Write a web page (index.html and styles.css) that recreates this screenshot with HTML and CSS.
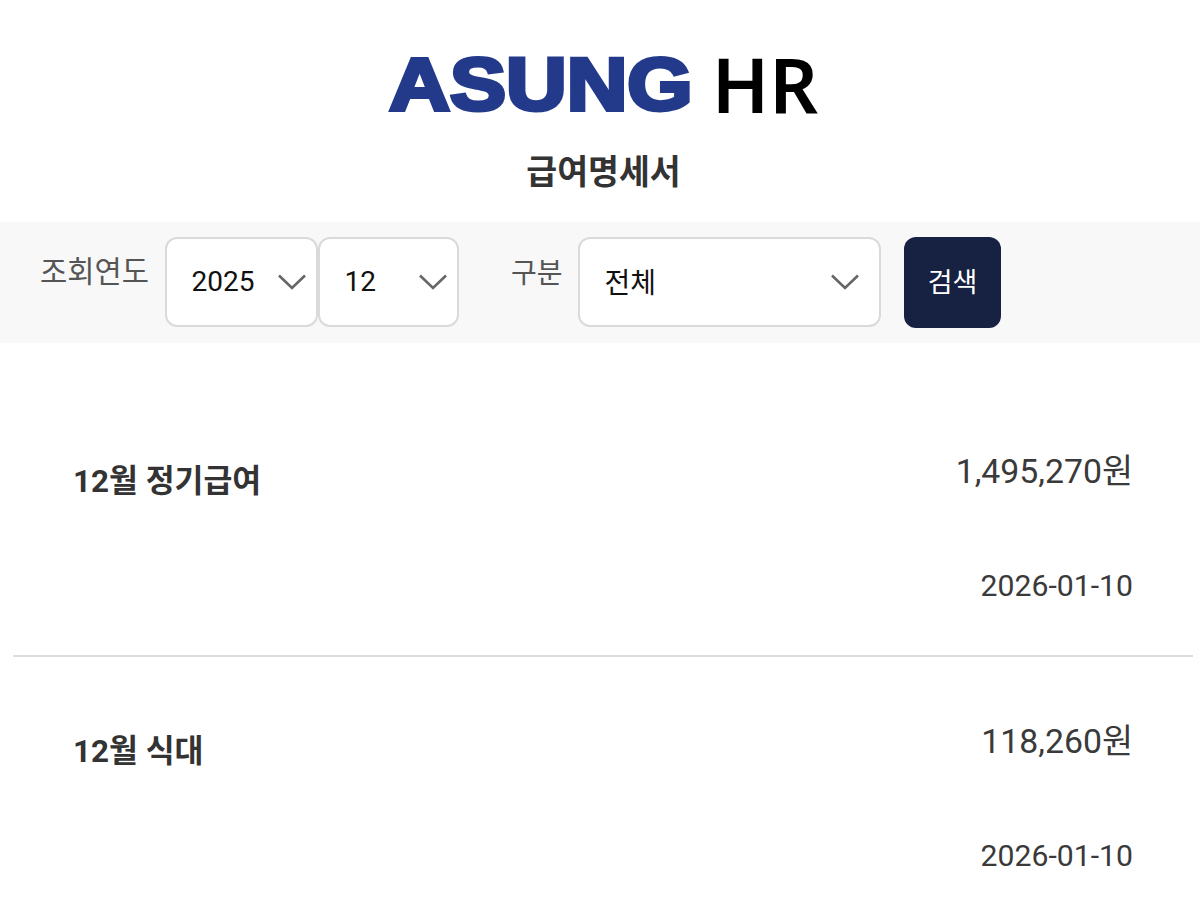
FILE: index.html
```html
<!DOCTYPE html>
<html lang="ko">
<head>
    <meta charset="UTF-8">
    <meta name="viewport" content="width=device-width, initial-scale=1.0">
    <title>급여명세서</title>
    <link rel="stylesheet" href="styles.css">
</head>
<body>
    <header class="header">
        <div class="brand">
            <span class="brand-logo"><span class="brand-word">ASUNG</span></span>
            <span class="brand-hr">HR</span>
        </div>
        <h1 class="page-title">급여명세서</h1>
    </header>

    <form class="filter">
        <label class="filter-label label-year">조회연도</label>
        <div class="select select-year">
            <span>2025</span>
            <svg class="chevron" viewBox="0 0 28 16"><path d="M1 1.5 L14 14 L27 1.5"/></svg>
        </div>
        <div class="select select-month">
            <span>12</span>
            <svg class="chevron" viewBox="0 0 28 16"><path d="M1 1.5 L14 14 L27 1.5"/></svg>
        </div>
        <label class="filter-label label-type">구분</label>
        <div class="select select-type">
            <span>전체</span>
            <svg class="chevron" viewBox="0 0 28 16"><path d="M1 1.5 L14 14 L27 1.5"/></svg>
        </div>
        <button type="button" class="search">검색</button>
    </form>

    <ul class="pay-list">
        <li class="pay-item">
            <div class="pay-name">12월 정기급여</div>
            <div class="pay-info">
                <div class="pay-amount">1,495,270원</div>
                <div class="pay-date">2026-01-10</div>
            </div>
        </li>
        <li class="pay-item">
            <div class="pay-name">12월 식대</div>
            <div class="pay-info">
                <div class="pay-amount">118,260원</div>
                <div class="pay-date">2026-01-10</div>
            </div>
        </li>
    </ul>
</body>
</html>
```

FILE: styles.css
```css
* {
    box-sizing: border-box;
}
html, body {
    height: 100%;
    overflow: hidden;
}
body {
    margin: 0;
    background: #fff;
    color: #333;
    font-family: Roboto, "Noto Sans CJK KR", sans-serif;
}
.header {
    height: 222px;
    padding-top: 44px;
    text-align: center;
}
.brand {
    display: flex;
    justify-content: center;
    align-items: center;
    height: 80px;
    padding-left: 4px;
}
.brand-logo {
    display: block;
    width: 300px;
    height: 80px;
    line-height: 80px;
    text-align: left;
}
.brand-word {
    display: inline-block;
    padding-left: 3px;
    font-family: "Liberation Sans", Arial, sans-serif;
    font-size: 75px;
    font-weight: 700;
    color: #233a8b;
    -webkit-text-stroke: 4px #233a8b;
    transform: scaleX(1.12);
    transform-origin: left center;
    white-space: nowrap;
}
.brand-hr {
    margin-left: 26px;
    font-family: "Noto Sans", sans-serif;
    font-size: 76px;
    font-weight: 600;
    line-height: 80px;
    color: #000;
}
.page-title {
    margin: 25px 0 0;
    padding-left: 7px;
    font-size: 33.6px;
    font-weight: 700;
    line-height: 48px;
    color: #333;
}
.filter {
    display: flex;
    align-items: flex-start;
    height: 121px;
    padding: 15px 0 0 40px;
    background: #f8f8f8;
}
.filter-label {
    margin-top: 18px;
    line-height: 38px;
    color: #555;
}
.label-year {
    width: 125px;
    margin-top: 16px;
    font-size: 29.6px;
}
.label-type {
    width: 67px;
    margin-left: 52px;
    font-size: 28px;
}
.select {
    display: flex;
    justify-content: space-between;
    align-items: center;
    height: 90px;
    padding: 0 24px 0 24.5px;
    background: #fff;
    border: 2.5px solid #dadada;
    border-radius: 12px;
    font-size: 28px;
    color: #111;
}
.select span {
    margin-top: -2px;
}
.select-year {
    width: 153px;
    padding-right: 10px;
}
.select-month {
    width: 141px;
    padding-right: 10px;
}
.select-type {
    width: 303px;
    padding-right: 20px;
}
.chevron {
    width: 28px;
    height: 16px;
    fill: none;
    stroke: #666;
    stroke-width: 2.6;
}
.search {
    width: 97px;
    height: 91px;
    margin-left: 23px;
    padding: 0 0 4px;
    background: #172142;
    border: none;
    border-radius: 12px;
    color: #fff;
    font-family: inherit;
    font-size: 27px;
}
.pay-list {
    margin: 0;
    padding: 44px 7px 0 13px;
    list-style: none;
}
.pay-item {
    display: flex;
    justify-content: space-between;
    height: 270px;
    padding: 0 60px;
    border-bottom: 2px solid #dcdcdc;
}
.pay-item:last-child {
    border-bottom: none;
}
.pay-name {
    margin-top: 71px;
    font-size: 31.4px;
    font-weight: 700;
    line-height: 48px;
    color: #333;
}
.pay-info {
    text-align: right;
}
.pay-amount {
    margin-top: 60px;
    font-size: 33.8px;
    line-height: 50px;
    color: #3a3a3a;
}
.pay-date {
    margin-top: 64px;
    font-size: 30.2px;
    line-height: 50px;
    color: #3a3a3a;
}
```
